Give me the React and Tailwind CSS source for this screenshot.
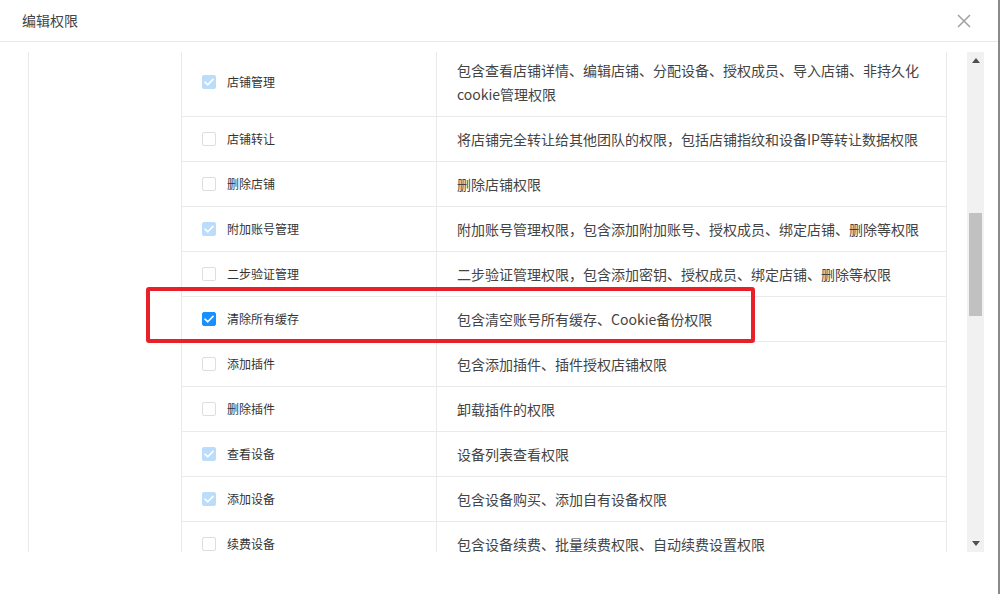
import React from "react";

const rows = [
  {
    name: "店铺管理",
    state: "locked",
    desc: "包含查看店铺详情、编辑店铺、分配设备、授权成员、导入店铺、非持久化cookie管理权限",
  },
  { name: "店铺转让", state: "off", desc: "将店铺完全转让给其他团队的权限，包括店铺指纹和设备IP等转让数据权限" },
  { name: "删除店铺", state: "off", desc: "删除店铺权限" },
  { name: "附加账号管理", state: "locked", desc: "附加账号管理权限，包含添加附加账号、授权成员、绑定店铺、删除等权限" },
  { name: "二步验证管理", state: "off", desc: "二步验证管理权限，包含添加密钥、授权成员、绑定店铺、删除等权限" },
  { name: "清除所有缓存", state: "on", desc: "包含清空账号所有缓存、Cookie备份权限" },
  { name: "添加插件", state: "off", desc: "包含添加插件、插件授权店铺权限" },
  { name: "删除插件", state: "off", desc: "卸载插件的权限" },
  { name: "查看设备", state: "locked", desc: "设备列表查看权限" },
  { name: "添加设备", state: "locked", desc: "包含设备购买、添加自有设备权限" },
  { name: "续费设备", state: "off", desc: "包含设备续费、批量续费权限、自动续费设置权限" },
];

const Checkbox = ({ state }) => {
  const box =
    state === "on"
      ? "bg-[#1890ff] border-[#1890ff]"
      : state === "locked"
        ? "bg-[#bcdcfb] border-[#bcdcfb]"
        : "bg-white border-[#dcdee2]";
  return (
    <span className={`w-[14px] h-[14px] shrink-0 rounded-[2px] border flex items-center justify-center ${box}`}>
      {state !== "off" && (
        <svg width="10" height="8" viewBox="0 0 10 8" fill="none">
          <path d="M1 4.2 L3.8 6.8 L9 1.4" stroke="#fff" strokeWidth="1.6" strokeLinecap="round" strokeLinejoin="round" />
        </svg>
      )}
    </span>
  );
};

export default function App() {
  return (
    <div
      className="relative w-[1000px] h-[594px] bg-white flex overflow-hidden"
      style={{ fontFamily: '"Noto Sans CJK SC", "Microsoft YaHei", sans-serif' }}
    >
      <div className="w-[998px] flex flex-col">
        <div className="h-[42px] border-b border-[#e8eaec] flex items-center justify-between pl-[22px] pr-[26px]">
          <span className="text-[14px] text-[#444]">编辑权限</span>
          <svg width="16" height="16" viewBox="0 0 16 16">
            <path d="M2 2 L14 14 M14 2 L2 14" stroke="#a0a0a0" strokeWidth="1.5" />
          </svg>
        </div>

        <div className="pt-[10px] flex">
          <div className="ml-[28px] w-[919px] h-[500px] overflow-hidden border-l border-r border-[#e8eaec]">
            <div className="-mt-[4px] flex">
              <div className="w-[153px] shrink-0 border-r border-[#e8eaec]" />
              <div className="flex-1 flex flex-col">
                {rows.map((r) => (
                  <div key={r.name} className="flex border-b border-[#e8eaec]">
                    <div className="w-[255px] shrink-0 border-r border-[#e8eaec] pl-[20px] flex items-center gap-[11px]">
                      <Checkbox state={r.state} />
                      <span className="text-[12px] text-[#333]">{r.name}</span>
                    </div>
                    <div className="flex-1 pl-[20px] pr-[24px] py-[10px] text-[14px] leading-[24px] text-[#444]">
                      {r.desc}
                    </div>
                  </div>
                ))}
              </div>
            </div>
          </div>

          <div className="ml-[20px] w-[17px] h-[500px] bg-[#f1f1f1] flex flex-col items-center justify-between py-[6px]">
            <svg width="8" height="5" viewBox="0 0 8 5">
              <path d="M0 5 L4 0 L8 5 Z" fill="#505050" />
            </svg>
            <svg width="8" height="5" viewBox="0 0 8 5">
              <path d="M0 0 L4 5 L8 0 Z" fill="#505050" />
            </svg>
          </div>
        </div>
      </div>
      <div className="w-[2px] h-full bg-[#8a8a8a]" />

      {/* scrollbar thumb */}
      <div className="absolute left-[969px] top-[213px] w-[13px] h-[103px] bg-[#c1c1c1]" />

      {/* red highlight annotation */}
      <div className="absolute left-[146px] top-[287px] w-[609px] h-[56px] border-4 border-[#e8202a] rounded-[3px]" />
    </div>
  );
}
